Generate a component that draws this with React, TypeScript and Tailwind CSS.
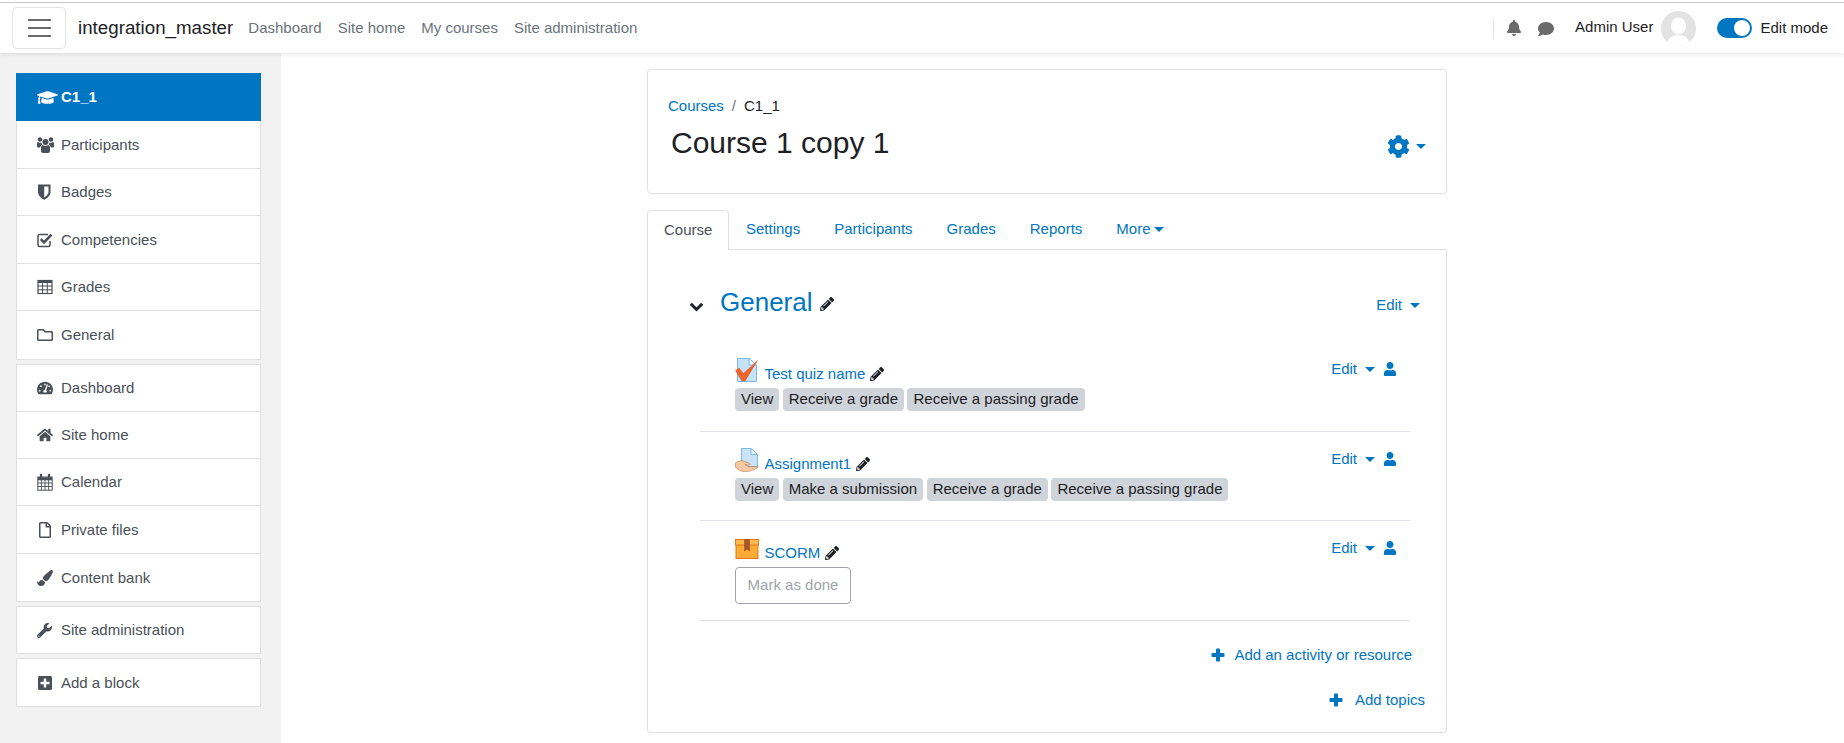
import React from "react";
import {
  FaGraduationCap,
  FaRegFolder,
  FaTachometerAlt,
  FaHome,
  FaRegFile,
  FaPaintBrush,
  FaWrench,
  FaPlusSquare,
  FaBell,
  FaComment,
  FaCog,
  FaPencilAlt,
  FaUser,
} from "react-icons/fa";

const Caret = ({ className = "" }: { className?: string }) => (
  <span className={`inline-block w-0 h-0 border-x-[5px] border-x-transparent border-t-[5px] border-t-[#0075c2] ${className}`} />
);

const Pencil = ({ className = "" }: { className?: string }) => (
  <FaPencilAlt className={`text-[#1d2125] text-[14px] ${className}`} />
);

const Plus = () => (
  <svg width="14" height="14" viewBox="0 0 14 14" fill="#0075c2" className="shrink-0">
    <rect x="5" y="0.5" width="4" height="13" rx="0.8" />
    <rect x="0.5" y="5" width="13" height="4" rx="0.8" />
  </svg>
);

const UsersIcon = () => (
  <svg width="17" height="16" viewBox="0 0 17 16" fill="#495057">
    <circle cx="8.5" cy="5" r="3" />
    <circle cx="3" cy="2.5" r="2.2" />
    <circle cx="14" cy="2.5" r="2.2" />
    <path d="M0 6C0 5 1 5 2 5.5C3 6 4 5.6 4.4 5.4C4.6 6.5 5 7 5.5 7.5C4 8 3.4 9 3.2 10.5H1C0 10.5 0 9.5 0 9Z" />
    <path d="M17 6C17 5 16 5 15 5.5C14 6 13 5.6 12.6 5.4C12.4 6.5 12 7 11.5 7.5C13 8 13.6 9 13.8 10.5H16C17 10.5 17 9.5 17 9Z" />
    <path d="M4 10.5C4 8.8 5 8 6 8C7 9.2 10 9.2 11 8C12 8 13 8.8 13 10.5V14C13 15.2 12.2 16 11 16H6C4.8 16 4 15.2 4 14Z" />
  </svg>
);

const ShieldIcon = () => (
  <svg width="15" height="16" viewBox="0 0 15 16">
    <path d="M1 0.5H13.5V8C13.5 11.5 10 14.5 7.2 15.8C4.5 14.5 1 11.5 1 8Z" fill="#495057" />
    <path d="M7.2 2.5H11.5V8C11.5 10 9.5 12 7.2 13.5Z" fill="#ffffff" />
  </svg>
);

const CheckIcon = () => (
  <svg width="16" height="16" viewBox="0 0 16 16" fill="none">
    <path d="M13 9V13C13 14 12.3 14.5 11.5 14.5H2.5C1.7 14.5 1 14 1 13V4C1 3.2 1.7 2.5 2.5 2.5H11" stroke="#495057" strokeWidth="1.5" />
    <path d="M3.8 7.2L7 10.4L14.5 2.6" stroke="#495057" strokeWidth="2.6" />
  </svg>
);

const TableIcon = () => (
  <svg width="16" height="16" viewBox="0 0 16 16" fill="none" stroke="#495057">
    <rect x="1" y="1.5" width="14" height="13" strokeWidth="1.2" />
    <path d="M1 2.8H15" strokeWidth="2.4" />
    <path d="M1 7H15M1 10.8H15M5.6 2V14.5M10.3 2V14.5" strokeWidth="1" />
  </svg>
);

const CalendarIcon = () => (
  <svg width="16" height="17" viewBox="0 0 16 17" fill="none" stroke="#495057">
    <rect x="0.8" y="3" width="14.4" height="13.2" strokeWidth="1" />
    <path d="M1 4.8H15" strokeWidth="3" />
    <path d="M1 9H15M1 12.5H15M4.4 6V16M8 6V16M11.6 6V16" strokeWidth="0.9" />
    <path d="M4 0.5V4M12 0.5V4" strokeWidth="2.2" strokeLinecap="round" />
  </svg>
);

const Chevron = () => (
  <svg width="15" height="10" viewBox="0 0 15 10" fill="none" className="shrink-0 mt-[10px]">
    <path d="M1.8 1.8L7.5 7.5L13.2 1.8" stroke="#1d2125" strokeWidth="3" />
  </svg>
);

const QuizIcon = () => (
  <svg width="24" height="24" viewBox="0 0 24 24" className="shrink-0">
    <path d="M2.5 0.5H14L21.5 7V23.5H2.5Z" fill="#c5e3f8" stroke="#7db8ea" />
    <path d="M14 0.5V7H21.5Z" fill="#eef7fd" stroke="#7db8ea" />
    <path d="M0.5 12.5L4 10L8.5 15.5L22.5 2.5L10 23H7Z" fill="#f0642a" stroke="#d9521c" strokeWidth="0.5" />
  </svg>
);

const AssignIcon = () => (
  <svg width="24" height="24" viewBox="0 0 24 24" className="shrink-0">
    <path d="M6.5 0.5H16L22.5 6.5V18.5H6.5Z" fill="#c9e4f8" stroke="#7db8ea" />
    <path d="M16 0.5V6.5H22.5Z" fill="#eef7fd" stroke="#7db8ea" />
    <path d="M0.3 15C3 13 7 12 10 13.5L14 15C16 16 15 17.5 13 17L10 16.5L13 18.5L23.5 18.8C20 22 14 24 8 23.5C4 23 2 20 0.3 19Z" fill="#f7c9a3" stroke="#b5784a" strokeWidth="0.6" />
  </svg>
);

const ScormIcon = () => (
  <svg width="24" height="20" viewBox="0 0 24 20" className="shrink-0">
    <rect x="1" y="5" width="22" height="14.5" fill="#fbaa33" stroke="#dd7a22" />
    <rect x="0.5" y="0.5" width="23" height="5.5" fill="#fdb94a" stroke="#dd7a22" />
    <path d="M9.5 0.5H14.5V12L12 10L9.5 12Z" fill="#a8562a" stroke="#8a4520" strokeWidth="0.5" />
  </svg>
);

const Avatar = () => (
  <svg width="35" height="35" viewBox="0 0 35 35" className="shrink-0">
    <defs>
      <clipPath id="avatarClip">
        <circle cx="17.5" cy="17.5" r="17.5" />
      </clipPath>
    </defs>
    <circle cx="17.5" cy="17.5" r="17.5" fill="#e3e3e3" />
    <g clipPath="url(#avatarClip)" fill="#ffffff">
      <ellipse cx="17.5" cy="15" rx="7.5" ry="8.5" />
      <path d="M6 36C6 28 10 24 17.5 24C25 24 29 28 29 36Z" />
    </g>
  </svg>
);

type NavItem = { label: string; icon: React.ReactNode };

const courseItems: NavItem[] = [
  { label: "Participants", icon: <UsersIcon /> },
  { label: "Badges", icon: <ShieldIcon /> },
  { label: "Competencies", icon: <CheckIcon /> },
  { label: "Grades", icon: <TableIcon /> },
  { label: "General", icon: <FaRegFolder className="text-[16px]" /> },
];

const siteItems: NavItem[] = [
  { label: "Dashboard", icon: <FaTachometerAlt className="text-[16px]" /> },
  { label: "Site home", icon: <FaHome className="text-[16px]" /> },
  { label: "Calendar", icon: <CalendarIcon /> },
  { label: "Private files", icon: <FaRegFile className="text-[16px]" /> },
  { label: "Content bank", icon: <FaPaintBrush className="text-[16px]" /> },
];

const SideRow = ({ item, last, rowClass }: { item: NavItem; last?: boolean; rowClass: string }) => (
  <div className={`flex items-center pl-[20px] pt-[1px] text-[#495057] ${rowClass} ${last ? "" : "border-b border-[#dfdfdf]"}`}>
    <span className="w-[24px] text-[#495057] shrink-0">{item.icon}</span>
    <span>{item.label}</span>
  </div>
);

const SideGroup = ({ items, rowClass }: { items: NavItem[]; rowClass: string }) => (
  <div className="bg-white border border-[#dfdfdf] mb-[4px]">
    {items.map((item, i) => (
      <SideRow key={item.label} item={item} rowClass={rowClass} last={i === items.length - 1} />
    ))}
  </div>
);

const Badge = ({ children }: { children: React.ReactNode }) => (
  <span className="h-[23px] px-[6px] flex items-center bg-[#ced4da] rounded-[4px] text-[#1d2125] text-[15px]">{children}</span>
);

const EditMenu = () => (
  <div className="flex items-center self-start text-[#0075c2] pt-[8px] h-[30px]">
    <span>Edit</span>
    <Caret className="ml-[8px]" />
    <FaUser className="ml-[8px] text-[14px] mb-[1px]" />
  </div>
);

const Activity = ({
  icon,
  name,
  children,
  className,
}: {
  icon: React.ReactNode;
  name: string;
  children: React.ReactNode;
  className: string;
}) => (
  <div className={`flex justify-between pl-[35px] pr-[13px] border-b border-[#dee2e6] ${className}`}>
    <div>
      <div className="flex items-end h-[35px]">
        {icon}
        <span className="ml-[5.5px] text-[#0075c2] leading-[22px]">{name}</span>
        <Pencil className="ml-[5px] mb-[4px]" />
      </div>
      {children}
    </div>
    <EditMenu />
  </div>
);

export default function App() {
  return (
    <div className="h-[743px] overflow-hidden flex flex-col bg-white text-[15px] font-['Liberation_Sans',Arial,sans-serif] text-[#1d2125]">
      <header className="relative z-10 h-[53px] shrink-0 pt-[2px] bg-white shadow-[0_2px_4px_rgba(0,0,0,0.08)]">
        <div className="h-[1px] bg-[#c8c8c8]" />
        <div className="h-[50px] flex items-center pl-[12px] pr-[16px]">
          <div className="w-[54px] h-[42px] flex flex-col items-center justify-center gap-[6px] border border-[#e4e4e4] rounded-[4px]">
            <span className="w-[23px] h-[2px] bg-[#6a6a6a]" />
            <span className="w-[23px] h-[2px] bg-[#6a6a6a]" />
            <span className="w-[23px] h-[2px] bg-[#6a6a6a]" />
          </div>
          <span className="ml-[12px] text-[18.75px] text-[#1d2125]">integration_master</span>
          <nav className="ml-[15px] flex gap-[16px] text-[#6a737b]">
            <span>Dashboard</span>
            <span>Site home</span>
            <span>My courses</span>
            <span>Site administration</span>
          </nav>
          <div className="ml-auto flex items-center">
            <span className="w-px h-[21px] bg-[#dee2e6]" />
            <FaBell className="ml-[12px] text-[16px] text-[#6a6a6a]" />
            <FaComment className="ml-[16px] mt-[2px] text-[16px] text-[#6a6a6a]" />
            <span className="ml-[21px] mb-[2px] text-[#1d2125]">Admin User</span>
            <span className="ml-[8px]"><Avatar /></span>
            <span className="ml-[21px] w-[35px] h-[20px] rounded-full bg-[#0075c2] flex items-center justify-end pr-[2px]">
              <span className="w-[16px] h-[16px] rounded-full bg-white" />
            </span>
            <span className="ml-[8px] text-[#1d2125]">Edit mode</span>
          </div>
        </div>
      </header>

      <div className="flex flex-1 min-h-0">
        <aside className="w-[281px] shrink-0 bg-[#f2f2f2] pt-[20px] pl-[16px] pr-[20px]">
          <div className="h-[48px] bg-[#0075c2] flex items-center pl-[21px] text-white font-bold">
            <FaGraduationCap className="text-[21px] shrink-0" />
            <span className="ml-[3px]">C1_1</span>
          </div>
          <div className="bg-white border border-[#dfdfdf] border-t-0 mb-[4px]">
            {courseItems.map((item, i) => (
              <SideRow key={item.label} item={item} rowClass="h-[47.5px]" last={i === courseItems.length - 1} />
            ))}
          </div>
          <SideGroup items={siteItems} rowClass="h-[47.3px]" />
          <SideGroup rowClass="h-[46.5px]" items={[{ label: "Site administration", icon: <FaWrench className="text-[15px]" /> }]} />
          <SideGroup rowClass="h-[46.5px]" items={[{ label: "Add a block", icon: <FaPlusSquare className="text-[16px]" /> }]} />
        </aside>

        <main className="pl-[366px] pt-[16px]">
          <div className="w-[800px]">
            <section className="h-[125px] border border-[#dee2e6] rounded-[4px] pl-[20px] pr-[19px] pt-[25px] flex justify-between">
              <div>
                <div className="flex items-center leading-[22px]">
                  <span className="text-[#0075c2]">Courses</span>
                  <span className="mx-[8px] text-[#6a737b]">/</span>
                  <span>C1_1</span>
                </div>
                <h1 className="ml-[3px] mt-[8px] text-[30px] leading-[36px]">Course 1 copy 1</h1>
              </div>
              <div className="flex items-center self-start mt-[40px] mr-[1px] text-[#0075c2]">
                <FaCog className="text-[23px]" />
                <Caret className="ml-[6px]" />
              </div>
            </section>

            <div className="mt-[16px] h-[40px] flex items-stretch text-[#0075c2]">
              <span className="w-[82px] flex items-center pl-[16px] border border-b-0 border-[#dee2e6] rounded-t-[4px] bg-white text-[#495057] h-[40px]">Course</span>
              <div className="flex-1 flex items-center border-b border-[#dee2e6] pl-[17px] gap-[34px]">
                <span>Settings</span>
                <span>Participants</span>
                <span>Grades</span>
                <span>Reports</span>
                <span className="flex items-center">More<Caret className="ml-[3px]" /></span>
              </div>
            </div>

            <section className="h-[483px] border border-t-0 border-[#dee2e6] rounded-b-[4px] px-[17px]">
              <div className="h-[100px] pt-[34px] pl-[24px] pr-[9px] flex justify-between items-start">
                <div className="flex items-center">
                  <Chevron />
                  <span className="ml-[16px] text-[26px] leading-[36px] text-[#0075c2]">General</span>
                  <Pencil className="ml-[7px] mt-[4px]" />
                </div>
                <div className="flex items-center text-[#0075c2] mt-[10px]">
                  <span>Edit</span>
                  <Caret className="ml-[8px]" />
                </div>
              </div>

              <div className="ml-[35px] w-[710px]">
                <Activity icon={<span className="mb-[3px]"><QuizIcon /></span>} name="Test quiz name" className="h-[82px]">
                  <div className="flex gap-[3.5px] mt-[3px]">
                    <Badge>View</Badge>
                    <Badge>Receive a grade</Badge>
                    <Badge>Receive a passing grade</Badge>
                  </div>
                </Activity>
                <Activity icon={<span className="mb-[3px]"><AssignIcon /></span>} name="Assignment1" className="h-[89px] pt-[8px]">
                  <div className="flex gap-[3.5px] mt-[3px]">
                    <Badge>View</Badge>
                    <Badge>Make a submission</Badge>
                    <Badge>Receive a grade</Badge>
                    <Badge>Receive a passing grade</Badge>
                  </div>
                </Activity>
                <Activity icon={<span className="mb-[5px]"><ScormIcon /></span>} name="SCORM" className="h-[100px] pt-[8px]">
                  <div className="mt-[3px] w-[116px] h-[37px] flex items-center justify-center border border-[#a0a4a8] rounded-[4px] text-[#a0a4a8] whitespace-nowrap">
                    Mark as done
                  </div>
                </Activity>
              </div>

              <div className="ml-[35px] w-[712px] flex justify-end mt-[23px] text-[#0075c2]">
                <div className="flex items-center h-[22px]">
                  <Plus />
                  <span className="ml-[9px]">Add an activity or resource</span>
                </div>
              </div>
              <div className="flex justify-end mt-[23px] pr-[4px] text-[#0075c2]">
                <div className="flex items-center h-[22px]">
                  <Plus />
                  <span className="ml-[12px]">Add topics</span>
                </div>
              </div>
            </section>
          </div>
        </main>
      </div>
    </div>
  );
}
